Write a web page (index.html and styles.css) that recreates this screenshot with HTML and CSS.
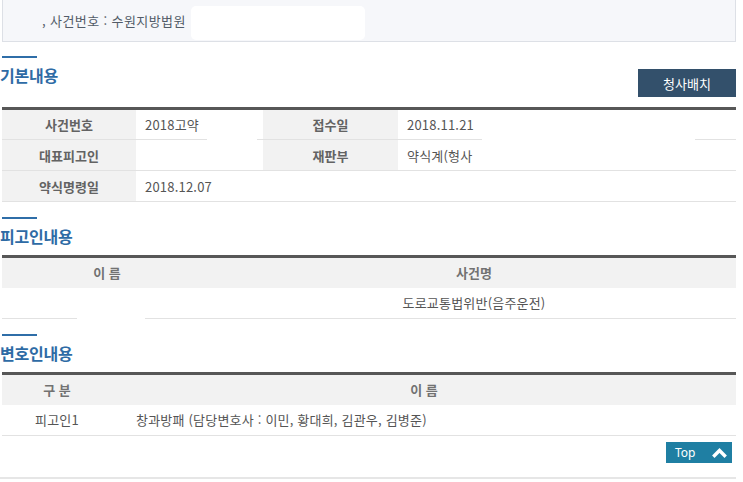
FILE: index.html
```html
<!DOCTYPE html>
<html lang="ko">
<head>
<meta charset="utf-8">
<title>사건 정보</title>
<link rel="stylesheet" href="styles.css">
</head>
<body>
<div class="page">
  <div class="topbox">
    <span class="crumb">, 사건번호 : 수원지방법원</span>
    <span class="blank-box"></span>
  </div>

  <section class="sec sec-first">
    <div class="sec-head">
      <div class="heading heading-first">
        <div class="bar"></div>
        <h2 class="title">기본내용</h2>
      </div>
      <button class="btn-dark">청사배치</button>
    </div>
    <table class="tbl tbl-basic">
      <colgroup>
        <col class="c1"><col class="c2"><col class="c3"><col class="c4">
      </colgroup>
      <tr>
        <th>사건번호</th>
        <td class="cell-rel">2018고약<span class="mask mask-a"></span></td>
        <th>접수일</th>
        <td class="cell-rel">2018.11.21<span class="mask mask-b"></span></td>
      </tr>
      <tr>
        <th>대표피고인</th>
        <td></td>
        <th>재판부</th>
        <td>약식계(형사</td>
      </tr>
      <tr>
        <th>약식명령일</th>
        <td colspan="3">2018.12.07</td>
      </tr>
    </table>
  </section>

  <section class="sec sec-second">
    <div class="heading">
      <div class="bar"></div>
      <h2 class="title">피고인내용</h2>
    </div>
    <table class="tbl tbl-def">
      <colgroup><col class="d1"><col></colgroup>
      <tr class="hrow"><th>이 름</th><th>사건명</th></tr>
      <tr>
        <td class="cell-rel"><span class="mask mask-c"></span></td>
        <td class="center">도로교통법위반(음주운전)</td>
      </tr>
    </table>
  </section>

  <section class="sec sec-third">
    <div class="heading">
      <div class="bar"></div>
      <h2 class="title">변호인내용</h2>
    </div>
    <table class="tbl tbl-law">
      <colgroup><col class="e1"><col></colgroup>
      <tr class="hrow"><th>구 분</th><th>이 름</th></tr>
      <tr>
        <td class="center">피고인1</td>
        <td class="lawyers">창과방패 (담당변호사 : 이민, 황대희, 김관우, 김병준)</td>
      </tr>
    </table>
    <div class="top-row">
      <a class="btn-top" href="#">Top
        <svg class="chev" width="15" height="11" viewBox="0 0 15 11"><polyline points="2.5,8.5 7.5,3.5 12.5,8.5" fill="none" stroke="#fff" stroke-width="3.4" stroke-linecap="square" stroke-linejoin="miter"/></svg>
      </a>
    </div>
  </section>
  <div class="bottom-line"></div>
</div>
</body>
</html>
```

FILE: styles.css
```css
* { box-sizing: border-box; }
html, body { margin: 0; padding: 0; background: #fff; }
body {
  font-family: "Noto Sans CJK KR", "Noto Sans", "Liberation Sans", sans-serif;
  font-size: 13px;
  color: #555;
}
.page { width: 734px; margin-left: 2px; }

.topbox {
  height: 42px;
  background: #f6f7fa;
  border: 1px solid #dde0e6;
  border-top: none;
  display: flex;
  align-items: center;
  padding-left: 39px;
}
.crumb { color: #525c68; font-size: 13px; letter-spacing: 0.4px; }
.blank-box {
  display: inline-block;
  width: 174px;
  height: 34px;
  background: #fff;
  border-radius: 5px;
  margin-left: 5px;
  align-self: flex-end;
  margin-bottom: 1px;
}

.sec-first { margin-top: 14px; }
.sec-second { margin-top: 15px; }
.sec-third { margin-top: 15px; }

.sec-head {
  display: flex;
  justify-content: space-between;
  align-items: flex-end;
}
.heading { margin-left: -2px; }
.heading-first { margin-bottom: 22px; }
.sec-second .heading, .sec-third .heading { margin-bottom: 9px; }
.bar { width: 35px; height: 2px; background: #2f6ea8; margin-left: 2px; }
.title {
  margin: 7px 0 0 0;
  font-size: 16px;
  line-height: 20px;
  font-weight: 700;
  color: #2e6ba5;
  letter-spacing: -0.2px;
}
.btn-dark {
  width: 98px;
  height: 28px;
  margin-bottom: 10px;
  border: none;
  background: #33506b;
  color: #fff;
  font-family: inherit;
  font-size: 13px;
  padding: 0;
}

.tbl {
  width: 100%;
  border-collapse: collapse;
  table-layout: fixed;
  border-top: 3px solid #575757;
}
.tbl th, .tbl td {
  height: 31px;
  padding: 0 8px;
  border-bottom: 1px solid #e2e2e2;
  font-size: 13px;
  vertical-align: middle;
  white-space: nowrap;
  overflow: visible;
}
.tbl th {
  background: #f2f2f2;
  font-weight: 700;
  color: #636363;
  text-align: center;
}
.tbl td { text-align: left; color: #555; letter-spacing: 0.2px; }
.tbl-basic .c1 { width: 134px; }
.tbl-basic .c2 { width: 127px; }
.tbl-basic .c3 { width: 135px; }
.tbl-basic td { padding-left: 9px; }

.tbl-def .d1 { width: 210px; }
.tbl-law .e1 { width: 110px; }
.hrow th { color: #727272; border-bottom: none; height: 31px; }
.tbl td.center { text-align: center; }
.tbl td.lawyers { padding-left: 24px; }

.cell-rel { position: relative; }
.mask { position: absolute; background: #fff; }
.mask-a { left: 71px; width: 50px; top: 2px; bottom: -2px; }
.mask-b { left: 84px; width: 213px; top: 2px; bottom: -2px; }
.mask-c { left: 75px; width: 68px; top: 0; bottom: -2px; }

.top-row { display: flex; justify-content: flex-end; margin-top: 6px; }
.btn-top {
  display: flex;
  align-items: center;
  justify-content: space-between;
  width: 66px;
  height: 21px;
  margin-right: 4px;
  padding: 0 5px 0 9px;
  background: #1f7fa3;
  color: #fff;
  font-family: "Noto Sans", "Liberation Sans", sans-serif;
  font-size: 12px;
  text-decoration: none;
}
.chev { display: block; }

.bottom-line { height: 2px; background: #e6e6e6; margin-top: 14px; margin-left: -2px; width: 736px; }
```
